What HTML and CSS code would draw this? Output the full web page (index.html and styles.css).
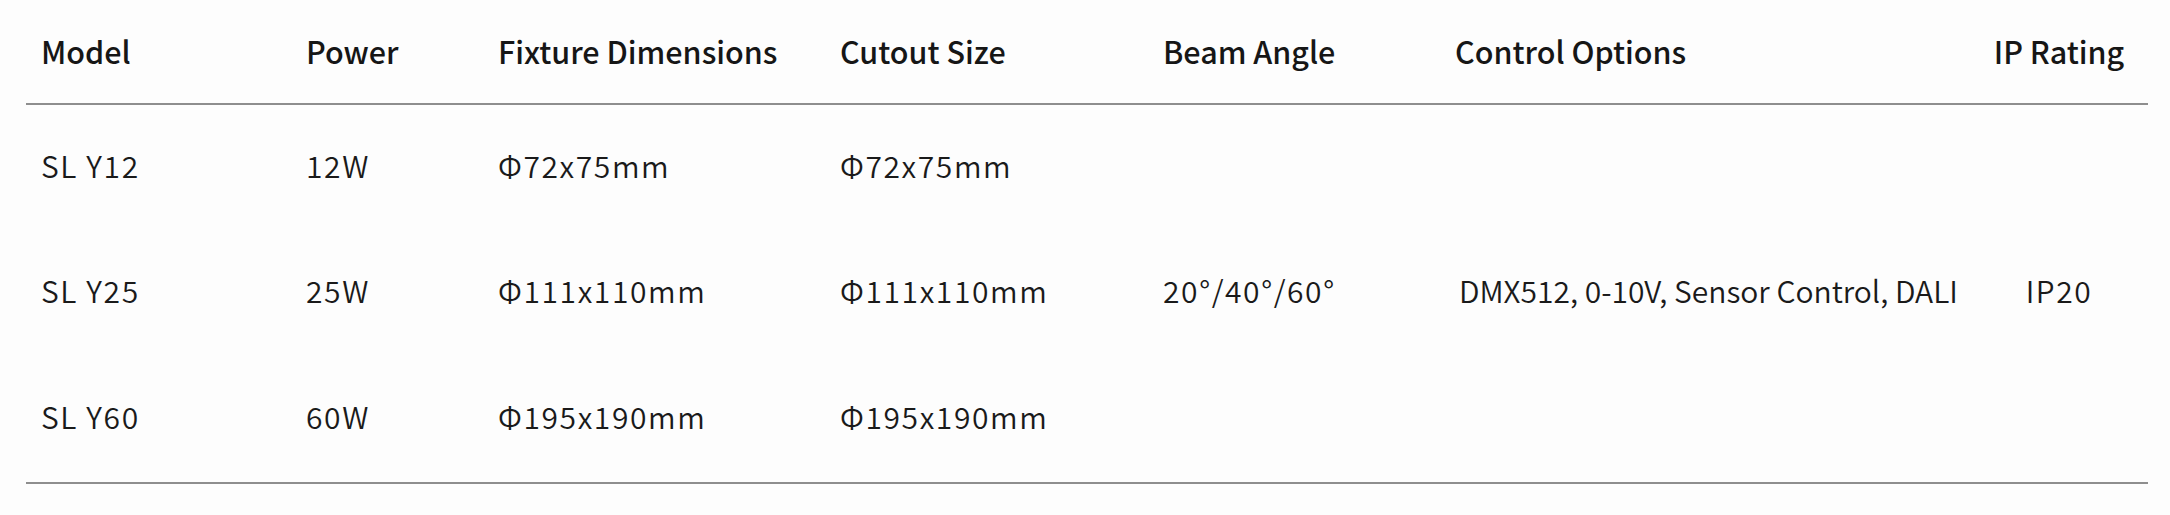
FILE: index.html
```html
<!DOCTYPE html>
<html>
<head>
<meta charset="utf-8">
<link rel="stylesheet" href="styles.css">
</head>
<body>
<div class="wrap">
<table class="spec">
<colgroup>
<col class="c1"><col class="c2"><col class="c3"><col class="c4"><col class="c5"><col class="c6"><col class="c7">
</colgroup>
<thead>
<tr>
<th class="first">Model</th><th>Power</th><th>Fixture Dimensions</th><th>Cutout Size</th><th>Beam Angle</th><th>Control Options</th><th class="center">IP Rating</th>
</tr>
</thead>
<tbody>
<tr>
<td class="first">SL Y12</td><td>12W</td><td>Φ72x75mm</td><td>Φ72x75mm</td>
<td rowspan="3">20°/40°/60°</td>
<td rowspan="3" class="ctrl">DMX512, 0-10V, Sensor Control, DALI</td>
<td rowspan="3" class="center">IP20</td>
</tr>
<tr>
<td class="first">SL Y25</td><td>25W</td><td>Φ111x110mm</td><td>Φ111x110mm</td>
</tr>
<tr>
<td class="first">SL Y60</td><td>60W</td><td>Φ195x190mm</td><td>Φ195x190mm</td>
</tr>
</tbody>
</table>
</div>
</body>
</html>
```

FILE: styles.css
```css
html, body {
  margin: 0;
  padding: 0;
  background: #fdfdfd;
}
.wrap {
  padding: 4px 22px 0 26px;
}
.spec {
  width: 2122px;
  border-collapse: collapse;
  table-layout: fixed;
  font-family: "Noto Sans CJK SC", "Noto Sans", sans-serif;
  color: #161616;
  border-bottom: 2px solid #8e8e8e;
}
.c1 { width: 261px; }
.c2 { width: 192px; }
.c3 { width: 342px; }
.c4 { width: 323px; }
.c5 { width: 292px; }
.c6 { width: 534px; }
.c7 { width: 178px; }
.spec th {
  font-weight: 500;
  font-size: 30.5px;
  text-align: left;
  padding: 0 0 6px 19px;
  height: 93px;
  vertical-align: middle;
  border-bottom: 2px solid #8e8e8e;
  white-space: nowrap;
}
.spec td {
  font-weight: 350;
  font-size: 30px;
  color: #1a1a1a;
  text-align: left;
  padding: 0 0 6px 19px;
  height: 119.5px;
  vertical-align: middle;
  white-space: nowrap;
  letter-spacing: 1.6px;
}
.spec .first {
  padding-left: 15px;
}
.spec td.ctrl {
  padding-left: 23px;
  letter-spacing: 0;
}
.spec .center {
  text-align: center;
  padding-left: 0;
}
```
